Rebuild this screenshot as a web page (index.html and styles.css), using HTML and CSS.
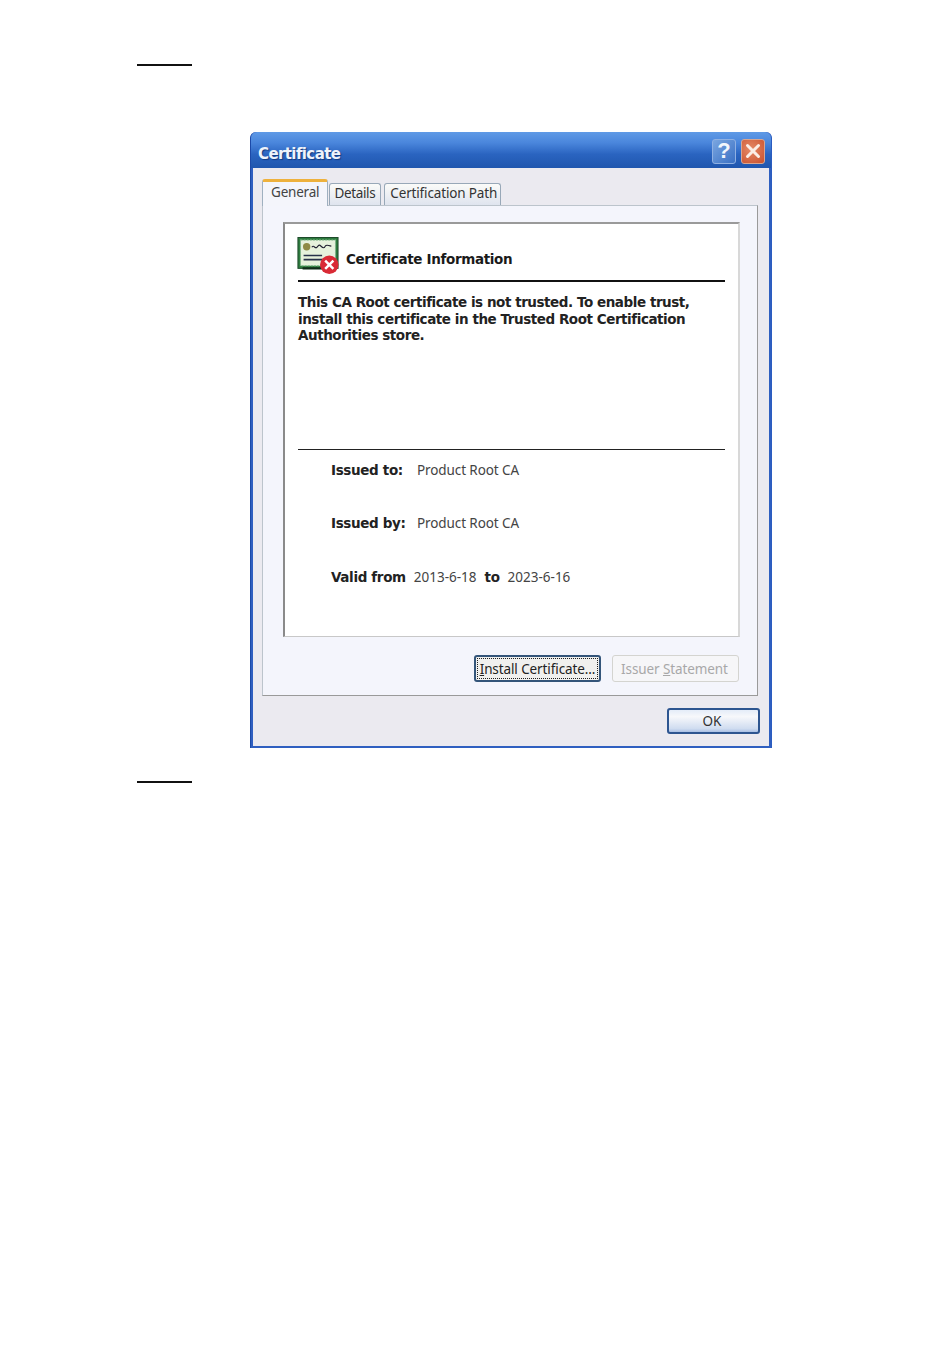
FILE: index.html
```html
<!DOCTYPE html>
<html lang="en">
<head>
<meta charset="utf-8">
<title>Certificate</title>
<link rel="stylesheet" href="styles.css">
</head>
<body>
<main class="page">
  <div class="rule rule-top"></div>
  <section class="window">
    <header class="titlebar">
      <span class="title">Certificate</span>
      <div class="controls">
        <span class="ctl ctl-help">?</span>
        <span class="ctl ctl-close">
          <svg width="16" height="16" viewBox="0 0 16 16"><path d="M2.5 2.5 13.5 13.5M13.5 2.5 2.5 13.5" stroke="#fbeee6" stroke-width="3" stroke-linecap="round"/></svg>
        </span>
      </div>
    </header>
    <div class="client">
      <nav class="tabs">
        <span class="tab tab-active">General</span>
        <span class="tab tab-details">Details</span>
        <span class="tab tab-path">Certification Path</span>
      </nav>
      <div class="panel">
        <div class="info">
          <div class="info-head">
            <svg class="cert-icon" width="43" height="37" viewBox="0 0 41 36">
              <rect x="0.5" y="0.5" width="39" height="30" fill="#2f7d3f" stroke="#1d4a2a"/>
              <rect x="3" y="3" width="34" height="25" fill="#e6f1dc"/>
              <rect x="3" y="3" width="34" height="25" fill="none" stroke="#7fb68a" stroke-dasharray="2 1"/>
              <circle cx="9" cy="9.5" r="3.6" fill="#8f8a45"/>
              <path d="M14 10c2-3 3 2 5 0s2-3 4-1 3 2 4 0 3-1 6 0" fill="none" stroke="#223" stroke-width="1.1"/>
              <path d="M6 18H24M6 22H24" stroke="#28324a" stroke-width="1.6"/>
              <path d="M5 30.5H38" stroke="#0f2b18" stroke-width="2"/>
              <circle cx="31" cy="27" r="9" fill="#d92a35"/>
              <path d="M27 23 35 31M35 23 27 31" stroke="#fff" stroke-width="2.4"/>
            </svg>
            <h2 class="info-title">Certificate Information</h2>
          </div>
          <p class="message">This CA Root certificate is not trusted. To enable trust,<br>install this certificate in the Trusted Root Certification<br>Authorities store.</p>
          <div class="details">
            <div class="row row-issued"><b>Issued to:</b><span>Product Root CA</span></div>
            <div class="row row-issued"><b>Issued by:</b><span>Product Root CA</span></div>
            <div class="row row-valid"><b>Valid from</b><span>2013-6-18</span><b>to</b><span>2023-6-16</span></div>
          </div>
        </div>
        <div class="panel-actions">
          <span class="btn btn-focus"><span class="focus"><u>I</u>nstall Certificate...</span></span>
          <span class="btn btn-disabled"><span>Issuer <u>S</u>tatement</span></span>
        </div>
      </div>
      <div class="footer">
        <span class="btn btn-ok">OK</span>
      </div>
    </div>
  </section>
  <div class="rule rule-bottom"></div>
</main>
</body>
</html>
```
FILE: styles.css
```css
* { box-sizing: border-box; }
html, body { margin: 0; background: #fff; }
body { width: 950px; height: 1370px; overflow: hidden; font-family: "Noto Sans", "Liberation Sans", sans-serif; color: #111; }
.page { padding: 64px 0 0 137px; }
.rule { width: 55px; height: 2px; background: #111; }
.rule-top { margin-bottom: 66px; }
.rule-bottom { margin-top: 33px; }

.window { width: 522px; height: 616px; margin-left: 113px; display: flex; flex-direction: column; background: #2f5fc0; border-radius: 6px 6px 0 0; padding: 0 2px 2px; border-left: 1px solid #1c4aa8; border-right: 1px solid #2b5cc0; }
.titlebar { height: 36px; margin: 0 -2px; padding: 3px 6px 0 7px; display: flex; align-items: center; justify-content: space-between; border-radius: 6px 6px 0 0; background: linear-gradient(#5f9ae6 0%, #4a86dc 30%, #2a64c0 62%, #1f56ae 100%); }
.title { margin-top: 4px; font: bold 15px "DejaVu Sans", sans-serif; color: #eef3fb; letter-spacing: -0.6px; text-shadow: 1px 1px 1px #123a80; }
.controls { display: flex; gap: 5px; margin-top: -1px; }
.ctl { width: 24px; height: 25px; border-radius: 3px; display: flex; align-items: center; justify-content: center; border: 1px solid #8fb0e2; }
.ctl-help { background: linear-gradient(135deg, #7aa6e0, #3a70c4); color: #f2f6fc; font: bold 22px "Liberation Sans", sans-serif; }
.ctl-close { border-color: #d8a590; background: radial-gradient(circle at 40% 40%, #e58a68, #c9502c); }

.client { flex: 1; background: #ebeaf0; padding: 10px 9px 0 9px; display: flex; flex-direction: column; }
.tabs { display: flex; height: 27px; align-items: flex-end; position: relative; z-index: 1; }
.tab { height: 22px; padding: 0 4px; margin-right: 2px; font: 13.5px "Noto Sans", sans-serif; line-height: 19px; color: #333; background: linear-gradient(#fbfbf9, #dfe4ee); border: 1px solid #98a8b8; border-bottom: 0; border-radius: 3px 3px 0 0; letter-spacing: -0.1px; }
.tab-details { padding-right: 5px; letter-spacing: -0.35px; }
.tab-path { margin-left: 1px; padding: 0 3px 0 5px; letter-spacing: -0.15px; }
.tab-active { height: 27px; padding: 0 8px; margin-right: 1px; line-height: 21px; background: #f4f5fb; border-color: #9fb0c0; border-top: 3px solid #eeb13c; margin-bottom: -1px; color: #444; letter-spacing: -0.2px; }

.panel { width: 496px; height: 491px; background: #f4f5fc; border: 1px solid #bcc4cc; border-right-color: #9a9a9a; border-bottom-color: #9a9a9a; padding: 16px 18px 0 20px; }
.info { width: 457px; height: 415px; background: #fff; border: 2px solid #c8c8c8; border-left-color: #8a8a8a; border-top-color: #9a9a9a; border-right-color: #d8d8d8; border-bottom-width: 1px; padding: 12px 13px 0 13px; }
.info-head { display: flex; align-items: flex-end; gap: 6px; height: 46px; padding-bottom: 7px; border-bottom: 2px solid #111; }
.cert-icon { flex: none; margin: 0 0 -1px -1px; }
.info-title { margin: 0 0 6px; font: bold 13.5px "DejaVu Sans", sans-serif; letter-spacing: -0.35px; color: #1a1a1a; }
.message { margin: 12px 0 0; height: 156px; font: bold 13.5px/16.7px "DejaVu Sans", sans-serif; letter-spacing: -0.45px; border-bottom: 1px solid #222; color: #222; }
.details { padding: 0 0 0 33px; }
.row { display: flex; align-items: center; height: 53.5px; font: 13.5px "Noto Sans", sans-serif; color: #444; }
.row:first-child { margin-top: -7px; }
.row b { font: bold 13.5px "DejaVu Sans", sans-serif; letter-spacing: -0.35px; color: #222; }
.row-issued b { width: 86px; }
.row-issued span { letter-spacing: -0.1px; }
.row-valid { gap: 8px; }

.panel-actions { display: flex; justify-content: flex-end; gap: 11px; padding-top: 18px; }
.btn { display: flex; align-items: center; justify-content: center; font: 13.5px "Noto Sans", sans-serif; border-radius: 3px; }
.btn-focus { width: 127px; height: 27px; border: 2px solid #34557a; background: #f0f0ee; color: #222; padding: 1px; }
.focus { display: block; width: 100%; height: 100%; line-height: 20px; text-align: center; border: 1px dotted #222; white-space: nowrap; letter-spacing: -0.1px; }
.btn-disabled { width: 127px; height: 27px; border: 1px solid #d4d4d0; background: #f6f6f8; color: #a8a8a8; padding-right: 2px; letter-spacing: -0.1px; }
.footer { display: flex; justify-content: flex-end; padding: 12px 0 0; }
.btn-ok { width: 93px; height: 26px; padding-right: 3px; border: 2px solid #2d5590; border-radius: 3px; color: #333; background: linear-gradient(#e4ecf8, #f7f8fb 30%, #cfdcf0 85%, #a9c0e4); }
```
